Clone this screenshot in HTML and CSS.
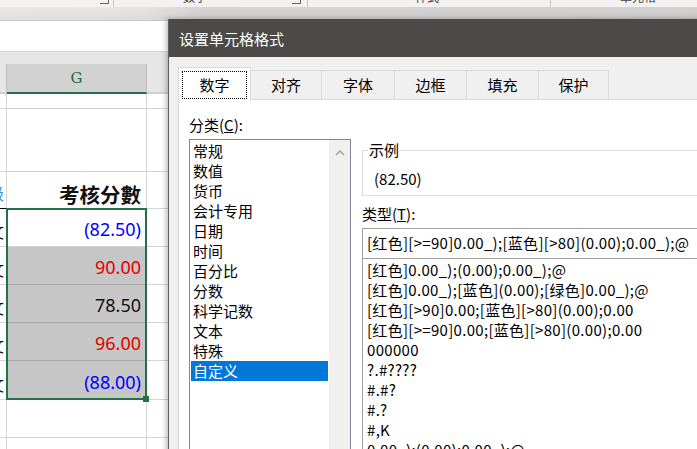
FILE: index.html
```html
<!DOCTYPE html>
<html lang="zh-CN">
<head>
<meta charset="utf-8">
<title>设置单元格格式</title>
<link rel="stylesheet" href="styles.css">
</head>
<body>
<div class="screen">
  <div class="ribbon">
    <div class="grp g1"><span class="launch"></span></div>
    <div class="grp g2"><span class="glabel">数字</span><span class="launch"></span></div>
    <div class="grp g3"><span class="glabel">样式</span></div>
    <div class="grp g4"><span class="glabel">单元格</span></div>
  </div>
  <div class="band"></div>
  <div class="sheet">
    <div class="fbar"></div>
    <div class="gap"></div>
    <div class="row hrow"><div class="c f"></div><div class="c g">G</div><div class="c h"></div></div>
    <div class="row r1"><div class="c f"></div><div class="c g"></div><div class="c h"></div></div>
    <div class="row r2"><div class="c f"></div><div class="c g"></div><div class="c h"></div></div>
    <div class="row r3"><div class="c f"><span class="frag blue">级</span></div><div class="c g head">考核分數</div><div class="c h"></div></div>
    <div class="row dr"><div class="c f"><span class="frag">文</span></div><div class="c g num blue">(82.50)</div><div class="c h"></div></div>
    <div class="row dr"><div class="c f"><span class="frag">文</span></div><div class="c g num red fill">90.00</div><div class="c h"></div></div>
    <div class="row dr"><div class="c f"><span class="frag">文</span></div><div class="c g num fill">78.50</div><div class="c h"></div></div>
    <div class="row dr"><div class="c f"><span class="frag">文</span></div><div class="c g num red fill">96.00</div><div class="c h"></div></div>
    <div class="row dr last"><div class="c f"><span class="frag">文</span></div><div class="c g num blue fill">(88.00)</div><div class="c h"></div></div>
    <div class="row dr"><div class="c f"></div><div class="c g"></div><div class="c h"></div></div>
    <div class="row dr"><div class="c f"></div><div class="c g"></div><div class="c h"></div></div>
    <div class="sel"><span class="handle"></span></div>
  </div>

  <div class="dialog">
    <div class="title">设置单元格格式</div>
    <div class="body">
      <div class="tabs">
        <div class="tab active w1"><span class="focus">数字</span></div>
        <div class="tab w2">对齐</div>
        <div class="tab w3">字体</div>
        <div class="tab w4">边框</div>
        <div class="tab w5">填充</div>
        <div class="tab w6">保护</div>
      </div>
      <div class="panel">
        <div class="leftcol">
          <div class="lbl">分类(<u>C</u>):</div>
          <div class="catlist">
            <div class="items">
              <div class="item">常规</div>
              <div class="item">数值</div>
              <div class="item">货币</div>
              <div class="item">会计专用</div>
              <div class="item">日期</div>
              <div class="item">时间</div>
              <div class="item">百分比</div>
              <div class="item">分数</div>
              <div class="item">科学记数</div>
              <div class="item">文本</div>
              <div class="item">特殊</div>
              <div class="item selected">自定义</div>
            </div>
            <div class="vscroll">
              <svg width="10" height="7" viewBox="0 0 10 7"><path d="M1 6 L5 2 L9 6" fill="none" stroke="#a6a6a6" stroke-width="1.6"/></svg>
            </div>
          </div>
        </div>
        <div class="rightcol">
          <fieldset class="sample">
            <legend>示例</legend>
            <div class="sampleval">(82.50)</div>
          </fieldset>
          <div class="lbl typelbl">类型(<u>T</u>):</div>
          <div class="typeinput">[红色][&gt;=90]0.00_);[蓝色][&gt;80](0.00);0.00_);@</div>
          <div class="typelist">
            <div class="titem">[红色]0.00_);(0.00);0.00_);@</div>
            <div class="titem">[红色]0.00_);[蓝色](0.00);[绿色]0.00_);@</div>
            <div class="titem">[红色][&gt;90]0.00;[蓝色][&gt;80](0.00);0.00</div>
            <div class="titem">[红色][&gt;=90]0.00;[蓝色][&gt;80](0.00);0.00</div>
            <div class="titem">000000</div>
            <div class="titem">?.#????</div>
            <div class="titem">#.#?</div>
            <div class="titem">#.?</div>
            <div class="titem">#,K</div>
            <div class="titem">0.00_);(0.00);0.00_);@</div>
          </div>
        </div>
      </div>
    </div>
  </div>
</div>
</body>
</html>
```
FILE: styles.css
```css
* { box-sizing: border-box; }
html, body { margin: 0; padding: 0; }
body {
  width: 697px; height: 449px; overflow: hidden;
  font-family: "Noto Sans CJK SC", "Noto Sans", sans-serif;
  background: #fff;
}
.screen { position: relative; width: 697px; height: 449px; overflow: hidden; }

/* ribbon remnant */
.ribbon { height: 7px; background: #f3f2f1; display: flex; overflow: hidden; }
.grp { position: relative; height: 7px; border-right: 1px solid #c8c6c4; flex-shrink: 0; }
.g1 { width: 114px; }
.g2 { width: 194px; }
.g3 { width: 243px; }
.g4 { flex: 1; border-right: none; }
.glabel {
  position: absolute; top: -9px; font-size: 12px; line-height: 12px; color: #444;
}
.g2 .glabel { left: 69px; }
.g3 .glabel { left: 107px; }
.g4 .glabel { left: 69px; }
.launch {
  position: absolute; top: -5px; width: 9px; height: 9px;
  border-right: 1px solid #666; border-bottom: 1px solid #666;
}
.g1 .launch { left: 100px; }
.g2 .launch { left: 178px; }

.band {
  height: 13px;
  background:
    linear-gradient(to bottom, rgba(255,255,255,0.15), rgba(0,0,0,0.02)),
    linear-gradient(to right, #e4e4e4 0, #e1e1e1 140px, #cfcfcf 200px, #cbcbcb 100%);
}

/* spreadsheet */
.sheet { position: relative; display: flex; flex-direction: column; }
.fbar { height: 32px; background: #fff; border-top: 1px solid #c6c6c6; border-bottom: 1px solid #d5d5d5; }
.gap { height: 12px; background: #e6e6e6; }
.row { display: flex; }
.c { border-right: 1px solid #d4d4d4; border-bottom: 1px solid #d4d4d4; flex-shrink: 0; }
.f { width: 7px; overflow: hidden; display: flex; justify-content: flex-end; align-items: flex-end; padding-right: 2px; }
.g { width: 140px; }
.h { flex: 1; border-right: none; }

.hrow { height: 30px; }
.hrow .c { background: #e6e6e6; border-bottom: 2px solid #cfcfcf; border-right-color: #bdbdbd; }
.hrow .g {
  background: #d2d2d2; border-bottom: 2px solid #217346;
  display: flex; align-items: center; justify-content: center;
  font-family: "DejaVu Serif", "Liberation Serif", serif; font-size: 15px; color: #1f6b44;
}
.r1 { height: 15px; }
.r2 { height: 63px; }
.r3 { height: 37px; }
.r3 .f, .r3 .g { border-bottom-color: #000; }
.head {
  display: flex; justify-content: flex-end; align-items: flex-end;
  padding-right: 5px; padding-bottom: 2px;
  font-size: 20.5px; line-height: 24px; font-weight: 700; color: #111;
}
.dr { height: 38px; }
.dr.last { height: 39px; }
.num {
  display: flex; justify-content: flex-end; align-items: flex-end;
  padding-right: 5px; padding-bottom: 6px;
  font-family: "Noto Sans", sans-serif; font-size: 18px; line-height: 22px; color: #111;
}
.fill { background: #c6c6c6; border-bottom-color: #a9a9a9; }
.blue { color: #0000ff; }
.red { color: #e00000; }
.frag { flex-shrink: 0; font-size: 16px; line-height: 20px; color: #111; padding-bottom: 5px; }
.frag.blue { color: #3b8ee4; }

.sel {
  position: absolute; left: 6px; top: 188px; width: 141px; height: 192px;
  border: 2px solid #217346;
}
.handle {
  position: absolute; right: -4px; bottom: -4px; width: 6px; height: 6px;
  background: #217346;
}

/* dialog */
.dialog {
  position: absolute; left: 168px; top: 19px; width: 560px; height: 460px;
  background: #f0f0f0; border-left: 1px solid #5e5e5e;
  box-shadow: -2px 0 5px rgba(0,0,0,0.25);
  display: flex; flex-direction: column;
  font-size: 15px; color: #000;
}
.title {
  height: 38px; flex-shrink: 0; background: #4b4a48; color: #fff;
  display: flex; align-items: center; padding-left: 10px; font-size: 15px;
}
.body { flex: 1; display: flex; flex-direction: column; padding: 10px 0 0 9px; }
.tabs { display: flex; align-items: flex-end; height: 32px; flex-shrink: 0; }
.tab {
  height: 29px; border: 1px solid #d9d9d9; border-bottom: none; margin-left: -1px;
  display: flex; align-items: center; justify-content: center;
  background: #f0f0f0; font-size: 15px; line-height: 20px; padding-bottom: 1px;
}
.tab.active {
  height: 33px; margin-bottom: -1px; margin-left: 0; background: #fff;
  position: relative; z-index: 1; padding: 3px 3px 1px;
}
.focus {
  flex: 1; align-self: stretch; border: 1px dotted #000;
  display: flex; align-items: center; justify-content: center; padding-bottom: 1px;
}
.w1 { width: 73px; }
.w2 { width: 72px; }
.w3 { width: 74px; }
.w4 { width: 73px; }
.w5 { width: 73px; }
.w6 { width: 71px; }

.panel {
  flex: 1; display: flex; background: #fff;
  border: 1px solid #d9d9d9; padding: 14px 0 0 10px;
}
.lbl { font-size: 15px; line-height: 22px; height: 22px; }
.leftcol { width: 162px; flex-shrink: 0; display: flex; flex-direction: column; }
.catlist {
  margin-top: 3px; height: 330px; border: 1px solid #828790;
  display: flex; background: #fff;
}
.items { flex: 1; padding: 1px; }
.item { height: 20px; line-height: 20px; padding-left: 2px; font-size: 15px; white-space: nowrap; }
.item.selected { background: #0078d7; color: #fff; }
.vscroll {
  width: 21px; background: #f0f0f0; display: flex; justify-content: center;
  align-items: flex-start; padding-top: 9px;
}

.rightcol { margin-left: 11px; width: 420px; flex-shrink: 0; display: flex; flex-direction: column; }
.sample {
  margin: 25px 0 0 0; padding: 7px 0 5px 11px;
  border: 1px solid #dcdcdc; min-width: 0;
}
.sample legend { padding: 0 1px; margin-left: -6px; font-size: 15px; line-height: 22px; }
.sampleval { font-size: 15px; line-height: 22px; }
.typelbl { margin-top: 7px; }
.typeinput {
  margin-top: 3px; height: 30px; border: 1px solid #a0a0a0; border-bottom: none;
  padding-left: 4px; font-size: 15px; line-height: 28px; white-space: nowrap; overflow: hidden;
  letter-spacing: 0.3px;
}
.typelist {
  height: 220px; border: 1px solid #a0a0a0; padding: 1px 0 0 4px;
}
.titem { height: 20px; line-height: 20px; font-size: 15px; white-space: nowrap; letter-spacing: 0.3px; }
```
